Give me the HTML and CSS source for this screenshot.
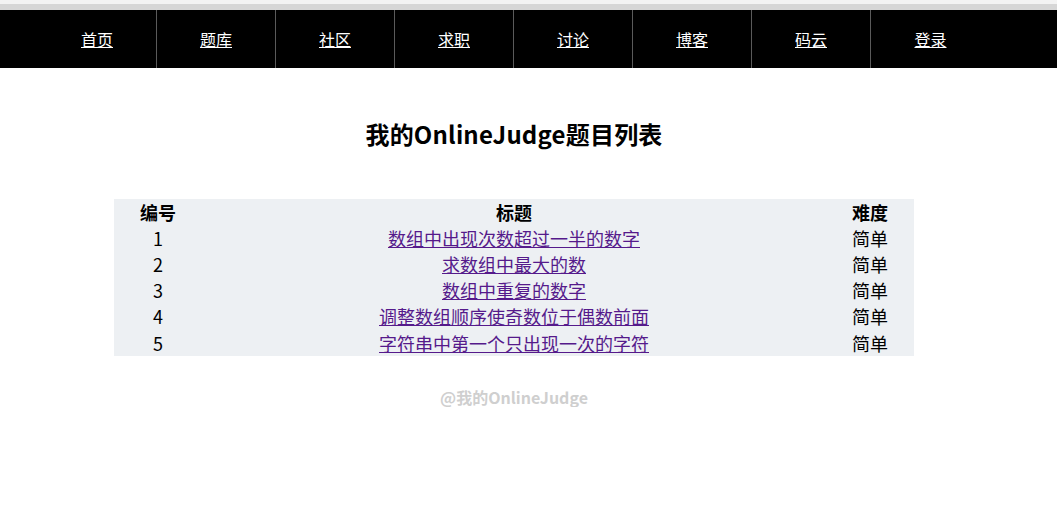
FILE: index.html
```html
<!DOCTYPE html>
<html lang="zh-CN">
<head>
<meta charset="utf-8">
<title>我的OnlineJudge</title>
<link rel="stylesheet" href="styles.css">
</head>
<body>
<div class="topstrip"></div>
<nav class="nav">
  <a class="nav-item" href="#">首页</a>
  <a class="nav-item" href="#">题库</a>
  <a class="nav-item" href="#">社区</a>
  <a class="nav-item" href="#">求职</a>
  <a class="nav-item" href="#">讨论</a>
  <a class="nav-item" href="#">博客</a>
  <a class="nav-item" href="#">码云</a>
  <a class="nav-item last" href="#">登录</a>
</nav>
<main class="content">
  <h1 class="title">我的OnlineJudge题目列表</h1>
  <table class="list">
    <tr><th class="c1">编号</th><th class="c2">标题</th><th class="c3">难度</th></tr>
    <tr><td>1</td><td><a href="#">数组中出现次数超过一半的数字</a></td><td>简单</td></tr>
    <tr><td>2</td><td><a href="#">求数组中最大的数</a></td><td>简单</td></tr>
    <tr><td>3</td><td><a href="#">数组中重复的数字</a></td><td>简单</td></tr>
    <tr><td>4</td><td><a href="#">调整数组顺序使奇数位于偶数前面</a></td><td>简单</td></tr>
    <tr><td>5</td><td><a href="#">字符串中第一个只出现一次的字符</a></td><td>简单</td></tr>
  </table>
  <div class="footer">@我的OnlineJudge</div>
</main>
</body>
</html>
```
FILE: styles.css
```css
html, body {
  margin: 0;
  padding: 0;
  background: #ffffff;
  font-family: "Noto Sans CJK SC", "Noto Sans", sans-serif;
  color: #000;
}
.topstrip {
  height: 4px;
  background: #f3f3f3;
  border-bottom: 6px solid #d6d6d6;
}
.nav {
  display: flex;
  height: 58px;
  background: #000;
  padding-left: 38px;
}
.nav-item {
  box-sizing: border-box;
  width: 119px;
  display: flex;
  align-items: center;
  justify-content: center;
  color: #fff;
  font-size: 16px;
  text-decoration: underline;
  border-right: 1px solid #5a5a5a;
}
.nav-item.last {
  border-right: none;
}
.content {
  width: 1028px;
}
.title {
  margin: 50px 0 0;
  text-align: center;
  font-size: 24px;
  line-height: 32px;
  font-weight: bold;
  letter-spacing: 0.2px;
}
.list {
  margin: 49px auto 0;
  width: 800px;
  border-collapse: collapse;
  background: #edf0f3;
  font-size: 18px;
}
.list th, .list td {
  height: 26px;
  line-height: 26px;
  padding: 0;
  text-align: center;
}
.list tr:last-child td {
  height: 27px;
}
.list th {
  font-weight: bold;
}
.c1, .c3 { width: 88px; }
.list a {
  color: #551a8b;
  text-decoration: underline;
}
.footer {
  margin-top: 31px;
  text-align: center;
  font-size: 16px;
  line-height: 20px;
  font-weight: bold;
  color: #cfcfcf;
}
```
